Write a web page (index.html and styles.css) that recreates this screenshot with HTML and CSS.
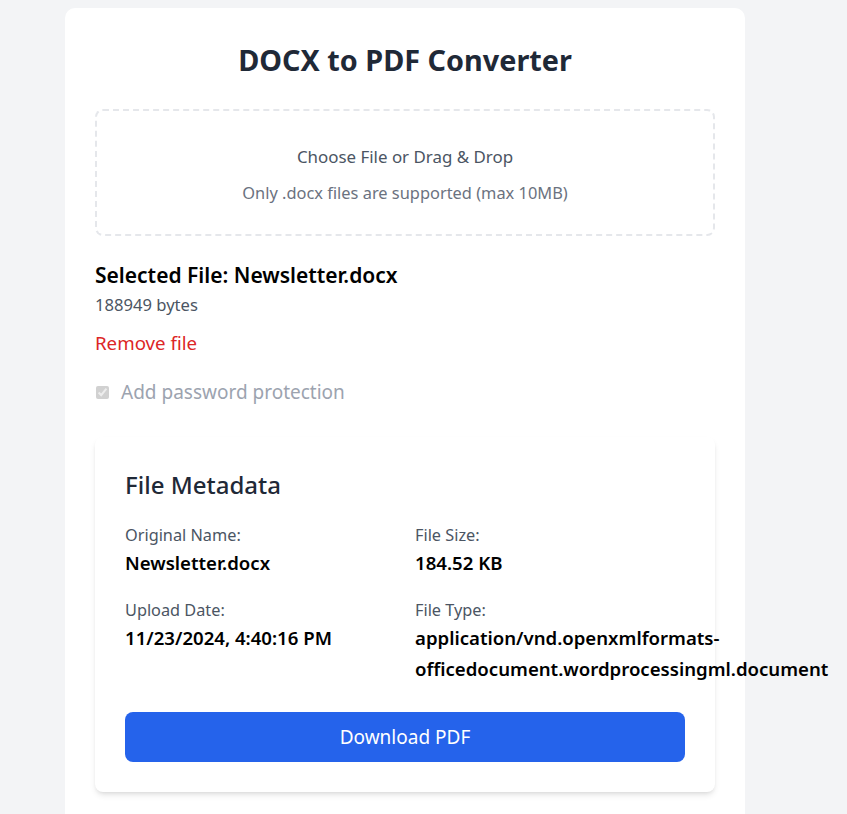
FILE: index.html
```html
<!DOCTYPE html>
<html lang="en">
<head>
<meta charset="utf-8">
<title>DOCX to PDF Converter</title>
<link rel="stylesheet" href="styles.css">
</head>
<body>
<main class="card">
  <h1 class="title">DOCX to PDF Converter</h1>
  <label class="dropzone">
    <span class="drop-main">Choose File or Drag &amp; Drop</span>
    <span class="drop-sub">Only .docx files are supported (max 10MB)</span>
  </label>
  <section class="selected">
    <h3 class="selected-name">Selected File: Newsletter.docx</h3>
    <p class="selected-size">188949 bytes</p>
    <button class="remove" type="button">Remove file</button>
    <label class="password">
      <input type="checkbox" checked disabled>
      <span>Add password protection</span>
    </label>
  </section>
  <section class="meta">
    <h2 class="meta-title">File Metadata</h2>
    <div class="meta-grid">
      <div class="meta-item">
        <p class="meta-label">Original Name:</p>
        <p class="meta-value">Newsletter.docx</p>
      </div>
      <div class="meta-item">
        <p class="meta-label">File Size:</p>
        <p class="meta-value">184.52 KB</p>
      </div>
      <div class="meta-item">
        <p class="meta-label">Upload Date:</p>
        <p class="meta-value">11/23/2024, 4:40:16 PM</p>
      </div>
      <div class="meta-item">
        <p class="meta-label">File Type:</p>
        <p class="meta-value wrap">application/vnd.openxmlformats-officedocument.wordprocessingml.document</p>
      </div>
    </div>
    <button class="download" type="button">Download PDF</button>
  </section>
</main>
</body>
</html>
```

FILE: styles.css
```css
* { box-sizing: border-box; }
html, body { margin: 0; padding: 0; }
body {
  background: #f3f4f6;
  font-family: "Noto Sans", "Open Sans", sans-serif;
  color: #111827;
  height: 814px;
  overflow: hidden;
}
.card {
  width: 680px;
  margin: 8px 0 0 65px;
  background: #ffffff;
  border-radius: 10px;
  padding: 34px 30px 60px;
  min-height: 900px;
}
.title {
  margin: 0 0 31px;
  text-align: center;
  font-size: 28.8px;
  line-height: 36px;
  font-weight: 700;
  color: #1f2937;
}
.dropzone {
  display: flex;
  flex-direction: column;
  align-items: center;
  height: 127px;
  border: 2px dashed #e5e7eb;
  border-radius: 8px;
  padding-top: 34px;
}
.drop-main {
  font-size: 16.9px;
  line-height: 24px;
  color: #4b5563;
}
.drop-sub {
  margin-top: 12px;
  font-size: 16.4px;
  line-height: 24px;
  color: #6b7280;
}
.selected { margin-top: 25px; }
.selected-name {
  margin: 0;
  font-size: 21px;
  line-height: 28px;
  font-weight: 600;
  color: #000;
}
.selected-size {
  margin: 4px 0 0;
  font-size: 16.6px;
  line-height: 24px;
  color: #4b5563;
}
.remove {
  display: block;
  margin: 12px 0 0;
  padding: 0;
  border: 0;
  background: none;
  font: inherit;
  font-size: 18.7px;
  line-height: 28px;
  color: #dc2626;
}
.password {
  display: flex;
  align-items: center;
  gap: 12px;
  margin-top: 21px;
  font-size: 19px;
  line-height: 28px;
  color: #9ca3af;
}
.password input {
  margin: 0 0 0 1px;
  width: 13px;
  height: 13px;
}
.meta {
  margin-top: 31px;
  padding: 32px 30px 30px;
  border-radius: 8px;
  background: #fff;
  box-shadow: 0 4px 6px -1px rgba(0,0,0,0.1), 0 2px 4px -2px rgba(0,0,0,0.1);
}
.meta-title {
  margin: 0;
  font-size: 24px;
  line-height: 32px;
  font-weight: 500;
  color: #1f2937;
}
.meta-grid {
  display: grid;
  grid-template-columns: 270px 270px;
  column-gap: 20px;
  row-gap: 20px;
  margin-top: 22px;
}
.meta-label {
  margin: 0;
  font-size: 16.3px;
  line-height: 24px;
  color: #4b5563;
}
.meta-value {
  margin: 0;
  font-size: 18.6px;
  line-height: 31px;
  font-weight: 600;
  color: #000;
  white-space: nowrap;
}
.meta-value.wrap { white-space: normal; width: 420px; }
.download {
  display: block;
  width: 100%;
  height: 50px;
  margin-top: 28px;
  border: 0;
  border-radius: 8px;
  background: #2563eb;
  color: #fff;
  font: inherit;
  font-size: 19px;
}
```
